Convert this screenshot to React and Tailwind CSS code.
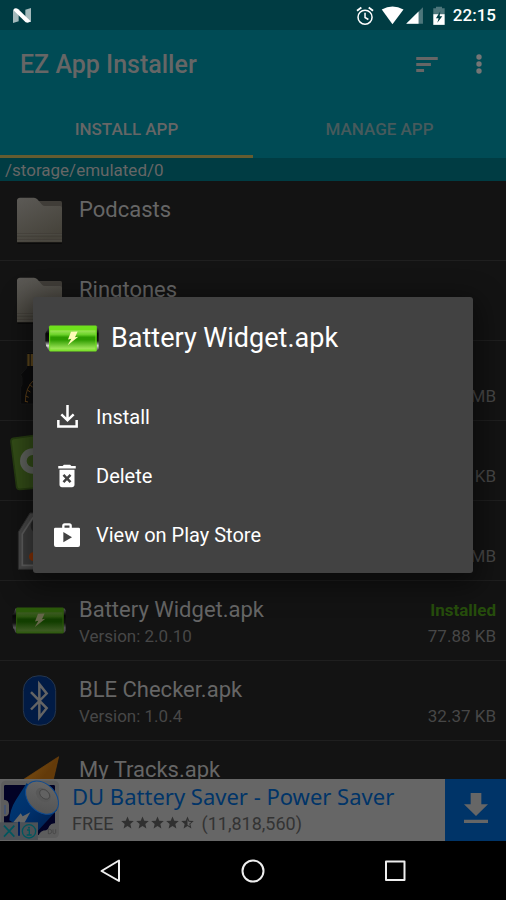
import React from "react";

function NougatLogo() {
  return (
    <svg viewBox="0 0 54 45" className="h-[15px] w-[18px]" aria-hidden="true">
      <path d="M0 4L17 9V40L0 45Z" fill="#a3b9bb" />
      <path d="M37 5L54 0V42L37 38Z" fill="#a3b9bb" />
      <path d="M3 2Q10 -1 16 4L53 40Q46 46 38 43L3 8Z" fill="#fff" />
    </svg>
  );
}

function StatusIcons() {
  return (
    <svg viewBox="0 0 266 56" className="h-[19px] w-[89px]" aria-hidden="true">
      <g fill="none" stroke="#fff" strokeWidth="4.5">
        <circle cx="27" cy="33" r="21" />
        <path d="M27 20V34L37 40" />
        <path d="M3 14L16 4M51 14L38 4" strokeWidth="5.5" />
      </g>
      <path d="M77 10Q109 -8 142 10L109 54Z" fill="#fff" />
      <path d="M150 53L200 3V53Z" fill="#4d767b" />
      <path d="M150 53L187 16V53Z" fill="#fff" />
      <path d="M231 6H239V2H257V6H265V24H231Z" fill="#4d767b" />
      <path d="M231 24H265V56H231Z" fill="#fff" />
      <path d="M252 15L239 36H247L243 50L258 30H250Z" fill="#003c43" />
    </svg>
  );
}

function SortIcon() {
  return (
    <svg viewBox="0 0 66 46" className="h-[15px] w-[22px]" fill="#666" aria-hidden="true">
      <path d="M0 0H66V9H0ZM0 18.500H45V27.500H0ZM0 37H24V46H0Z" />
    </svg>
  );
}

function MoreIcon() {
  return (
    <svg viewBox="0 0 6 20" className="h-5 w-[6px]" fill="#757575" aria-hidden="true">
      <circle cx="3" cy="3" r="2.700" />
      <circle cx="3" cy="10" r="2.700" />
      <circle cx="3" cy="17" r="2.700" />
    </svg>
  );
}

function FolderIcon() {
  return (
    <svg viewBox="-3 0 162 144" className="h-12 w-[54px]" aria-hidden="true">
      <defs>
        <linearGradient id="folder" x1="0" y1="0" x2="0.500" y2="1">
          <stop offset="0" stopColor="#5c5a56" />
          <stop offset="1" stopColor="#46433b" />
        </linearGradient>
      </defs>
      <rect x="13" y="132" width="134" height="9" rx="3" fill="#0a0a0a" />
      <path d="M70 12H143Q147 12 147 17V60H70Z" fill="#403d38" />
      <path d="M12 10Q13 2 21 2H63Q69 2 73 7L87 23Q90 27 96 27H141Q147 27 147 33V136H12Z" fill="url(#folder)" />
      <path d="M12 110H147M12 118H147M12 128H147" stroke="#3a3832" strokeWidth="1.500" />
      <path d="M12 112H147M12 130H147" stroke="#5c5951" strokeWidth="1" />
    </svg>
  );
}

function BatteryIcon({ dim }) {
  const id = dim ? "battery-dim" : "battery";
  const c = dim
    ? { edge: "#2c5a0b", light: "#3c5a22", deep: "#123e00", low: "#2b5410", cap: "#555", bolt: "#66664a" }
    : { edge: "#6fe01c", light: "#9be356", deep: "#2e9c00", low: "#6bd229", cap: "#ddd", bolt: "#fffbb8" };
  return (
    <svg viewBox="0 0 162 80" className="h-[27px] w-[54px]" aria-hidden="true">
      <defs>
        <linearGradient id={id} x1="0" y1="0" x2="0" y2="1">
          <stop offset="0" stopColor={c.edge} />
          <stop offset="0.180" stopColor={c.edge} />
          <stop offset="0.200" stopColor={c.light} />
          <stop offset="0.350" stopColor={c.low} />
          <stop offset="0.450" stopColor={c.deep} />
          <stop offset="0.550" stopColor={c.deep} />
          <stop offset="0.880" stopColor={c.light} />
          <stop offset="1" stopColor={c.edge} />
        </linearGradient>
        <linearGradient id={id + "-cap"} x1="0" y1="0" x2="0" y2="1">
          <stop offset="0" stopColor="#555" />
          <stop offset="0.300" stopColor="#060606" />
          <stop offset="0.600" stopColor="#111" />
          <stop offset="0.800" stopColor={c.cap} />
          <stop offset="1" stopColor="#444" />
        </linearGradient>
      </defs>
      <path d="M10 4H18V76H10L6 65H4L1 50V25L4 18H6Z" fill={"url(#" + id + "-cap)"} />
      <path d="M150 4H158L161 10V70L158 76H150Z" fill={"url(#" + id + "-cap)"} />
      <rect x="13" y="1" width="142" height="78" rx="3" fill={"url(#" + id + ")"} />
      <path d="M14 4V76M153 4V76" stroke={c.edge} strokeWidth="3" />
      <path d="M78 20L98 19L90 36L100 35L68 60L79 41L69 43Z" fill={c.bolt} />
    </svg>
  );
}

function SdCardIcon() {
  return (
    <svg viewBox="0 0 162 162" className="h-[54px] w-[54px] overflow-visible" aria-hidden="true">
      <path d="M44 -4H130V150H26V100L30 92V70L26 62L44 42Z" fill="#0b0b0c" stroke="#1c1c1c" strokeWidth="2" />
      <path d="M46 0H53V36H46ZM56 0H63V36H56ZM66 0H73V36H66Z" fill="#5e481d" />
      <path d="M40 144Q40 100 66 78" fill="none" stroke="#69471a" strokeWidth="2.500" />
      <path d="M40 142L48 144M41 126L50 130M46 108L55 114M54 92L62 100" fill="none" stroke="#69471a" strokeWidth="3" />
    </svg>
  );
}

function GreenCardIcon() {
  return (
    <svg viewBox="0 0 162 168" className="h-[56px] w-[54px] overflow-visible" aria-hidden="true">
      <path d="M4 16L150 -4L158 158L24 169Q16 170 14 162L-3 27Q-4 18 4 16Z" fill="#344e18" stroke="#263c11" strokeWidth="5" />
      <circle cx="62" cy="84" r="28" fill="none" stroke="#626660" strokeWidth="20" />
    </svg>
  );
}

function SimCardIcon() {
  return (
    <svg viewBox="0 0 162 174" className="h-[58px] w-[54px]" aria-hidden="true">
      <path d="M54 3H140V172H19V60Z" fill="#4a4a4a" stroke="#303030" strokeWidth="3" />
      <path d="M62 18H130V160H31V66Z" fill="#3e3e3e" stroke="#626262" strokeWidth="5" />
      <circle cx="78" cy="42" r="22" fill="#262626" />
      <circle cx="64" cy="134" r="13" fill="#8a3205" />
    </svg>
  );
}

function BluetoothIcon() {
  return (
    <svg viewBox="0 0 162 152" className="h-[51px] w-[54px]" aria-hidden="true">
      <rect x="34" y="2" width="97" height="148" rx="44" fill="#011b45" stroke="#26364c" strokeWidth="3" />
      <path d="M57 51L104 99L82 127V27L104 55L57 103" fill="none" stroke="#646464" strokeWidth="7.500" />
    </svg>
  );
}

function TracksIcon() {
  return (
    <svg viewBox="0 0 162 150" className="h-[50px] w-[54px]" aria-hidden="true">
      <defs>
        <linearGradient id="tracks" x1="0" y1="0" x2="0.600" y2="0.500">
          <stop offset="0" stopColor="#8b5d19" />
          <stop offset="1" stopColor="#633a09" />
        </linearGradient>
      </defs>
      <path d="M140 2L4 90L68 98L106 148Z" fill="url(#tracks)" stroke="#6e430d" strokeWidth="2" />
    </svg>
  );
}

const FILES = [
  { name: "Podcasts", icon: <FolderIcon /> },
  { name: "Ringtones", icon: <FolderIcon /> },
  { icon: <SdCardIcon />, size: "MB" },
  { icon: <GreenCardIcon />, size: "KB" },
  { icon: <SimCardIcon />, size: "MB" },
  { name: "Battery Widget.apk", icon: <BatteryIcon dim />, version: "Version: 2.0.10", size: "77.88 KB", installed: true },
  { name: "BLE Checker.apk", icon: <BluetoothIcon />, version: "Version: 1.0.4", size: "32.37 KB" },
  { name: "My Tracks.apk", icon: <TracksIcon /> },
];

function FileRow({ file }) {
  return (
    <li className="flex h-20 shrink-0 items-stretch border-b border-[#1f1f1f] pr-[10px] pl-3">
      <div className="flex w-[54px] shrink-0 items-center justify-center">{file.icon}</div>
      <div className="ml-[13px] flex min-w-0 flex-1 flex-col pt-[15px]">
        <div className="flex h-7 items-center justify-between">
          <span className="text-[22px] leading-7 text-[#666]">{file.name}</span>
          {file.installed && <span className="text-[17px] leading-7 font-bold text-[#264d0c]">Installed</span>}
        </div>
        <div className="flex h-6 items-center justify-between text-[17px] leading-6 text-[#474747]">
          <span>{file.version}</span>
          <span>{file.size}</span>
        </div>
      </div>
    </li>
  );
}

function InstallIcon() {
  return (
    <svg viewBox="0 0 63 69" className="h-[23px] w-[21px]" fill="none" stroke="#fff" strokeWidth="7.500" aria-hidden="true">
      <path d="M31.500 0V45M13 28L31.500 46L50 28" />
      <path d="M4 45V64.500H59V45" />
    </svg>
  );
}

function DeleteIcon() {
  return (
    <svg viewBox="0 0 24 24" className="h-[30px] w-[30px]" fill="#fff" aria-hidden="true">
      <path d="M6 19c0 1.100.9 2 2 2h8c1.100 0 2-.9 2-2V7H6v12zm2.460-7.120l1.410-1.410L12 12.590l2.120-2.120 1.410 1.410L13.410 14l2.120 2.120-1.410 1.410L12 15.410l-2.120 2.120-1.410-1.410L10.590 14l-2.130-2.120zM15.500 4l-1-1h-5l-1 1H5v2h14V4z" />
    </svg>
  );
}

function ShopIcon() {
  return (
    <svg viewBox="0 0 78 72" className="h-6 w-[26px]" aria-hidden="true">
      <path d="M28 16V8Q28 4 32 4H46Q50 4 50 8V16" fill="none" stroke="#fff" strokeWidth="7" />
      <path fillRule="evenodd" d="M4 14H74Q78 14 78 18V66Q78 72 72 72H6Q0 72 0 66V18Q0 14 4 14ZM28 27V58L54 42.500Z" fill="#fff" />
    </svg>
  );
}

function ActionDialog() {
  const actions = [
    { label: "Install", icon: <InstallIcon /> },
    { label: "Delete", icon: <DeleteIcon /> },
    { label: "View on Play Store", icon: <ShopIcon /> },
  ];
  return (
    <div className="absolute inset-x-0 top-[297px] px-[33px]">
      <section role="dialog" aria-labelledby="dialog-title" className="rounded-[3px] bg-[#424242] pb-[9px] shadow-[0_8px_28px_6px_rgba(0,0,0,0.45)]">
        <header className="flex h-[90px] items-center gap-3 pb-2 pl-3">
          <BatteryIcon />
          <h2 id="dialog-title" className="text-[27px] leading-8 text-white">Battery Widget.apk</h2>
        </header>
        {actions.map((a) => (
          <button key={a.label} type="button" className="flex h-[59px] w-full items-center gap-[14px] pl-[19px] text-left text-[20px] leading-6 text-white">
            <span className="flex w-[30px] justify-center">{a.icon}</span>
            {a.label}
          </button>
        ))}
      </section>
    </div>
  );
}

function Star({ half }) {
  return (
    <svg viewBox="0 0 24 24" className="h-[15px] w-[15px]" aria-hidden="true">
      {half ? (
        <path fill="#303030" d="M22 9.740l-7.190-.62L12 2.500 9.190 9.130 2 9.740l5.460 4.730-1.640 7.030L12 17.770l6.180 3.730-1.630-7.030L22 9.740zM12 15.900V6.600l1.710 4.040 4.380.38-3.320 2.880 1 4.280L12 15.900z" />
      ) : (
        <path fill="#303030" d="M12 17.770l6.180 3.730-1.640-7.030L22 9.740l-7.190-.61L12 2.500 9.190 9.130 2 9.740l5.460 4.730-1.640 7.030z" />
      )}
    </svg>
  );
}

function AdArtwork() {
  return (
    <svg viewBox="0 0 180 183" className="h-[61px] w-[60px] shrink-0" aria-hidden="true">
      <defs>
        <linearGradient id="ad-body" x1="0" y1="0" x2="1" y2="1">
          <stop offset="0" stopColor="#003b75" />
          <stop offset="0.500" stopColor="#00306b" />
          <stop offset="1" stopColor="#001c48" />
        </linearGradient>
        <linearGradient id="ad-top" x1="0" y1="0" x2="1" y2="1">
          <stop offset="0" stopColor="#6a6a6a" />
          <stop offset="1" stopColor="#505050" />
        </linearGradient>
      </defs>
      <rect x="3" y="5" width="174" height="172" rx="14" fill="#5d5d5d" />
      <path d="M16 18H161Q165 18 165 22V133Q153 132 148 141Q146 150 138 154Q122 154 116 168H12V112Q27 112 27 98V78Q27 63 12 62V22Q12 18 16 18Z" fill="#020225" />
      <path d="M80 12L172 92L104 166L70 150L28 124Q30 90 48 62Z" fill="url(#ad-body)" />
      <ellipse cx="126" cy="56" rx="57" ry="41" transform="rotate(46 126 56)" fill="url(#ad-top)" stroke="#0f4b91" strokeWidth="3" />
      <ellipse cx="130" cy="48" rx="25" ry="18" transform="rotate(42 130 48)" fill="#585858" />
      <ellipse cx="134" cy="46" rx="17" ry="12" transform="rotate(42 134 46)" fill="#626262" stroke="#3d3d3d" strokeWidth="2" />
      <path d="M40 130L62 103L68 112L91 100L73 132Z" fill="#676767" />
      <path d="M15 78V106" stroke="#304c86" strokeWidth="3" />
      <rect x="0" y="130" width="114" height="53" fill="#4d5257" />
      <path d="M57 128V170" stroke="#00205c" strokeWidth="6" />
      <path d="M12 140L43 173M43 140L12 173" stroke="#00565e" strokeWidth="5" />
      <circle cx="87" cy="157" r="20" fill="none" stroke="#00565e" strokeWidth="4" />
      <path d="M81 153H88V168M80 168H95" fill="none" stroke="#00565e" strokeWidth="4" />
      <circle cx="87" cy="146" r="3" fill="#00565e" />
      <path d="M145 151V164H149Q155 164 155 157.500Q155 151 149 151ZM159 151V160Q159 164 163 164Q167 164 167 160V151" fill="none" stroke="#3f3f3f" strokeWidth="2" />
    </svg>
  );
}

function AdBanner() {
  return (
    <aside className="flex h-[62px] shrink-0 bg-[#666]">
      <AdArtwork />
      <div className="flex min-w-0 flex-1 flex-col pl-3">
        <a href="#ad" className="font-['Noto_Sans','Open_Sans',sans-serif] text-[22px] leading-[34px] whitespace-nowrap text-[#003468]">DU Battery Saver - Power Saver</a>
        <div className="flex h-[22px] items-center text-[18px] leading-[22px] text-[#333]">
          <span>FREE</span>
          <span className="mr-[7px] ml-[6px] flex pb-1">
            <Star /><Star /><Star /><Star /><Star half />
          </span>
          <span>(11,818,560)</span>
        </div>
      </div>
      <button type="button" aria-label="Download" className="flex w-[61px] shrink-0 items-center justify-center bg-[#003468] pb-1">
        <svg viewBox="0 0 72 90" className="h-[30px] w-6" fill="#666" aria-hidden="true">
          <path d="M20 0H52V34H72L36 69L0 34H20ZM0 80H72V90H0Z" />
        </svg>
      </button>
    </aside>
  );
}

function NavigationBar() {
  const button = "flex flex-1 items-center justify-center";
  return (
    <nav className="flex h-[59px] shrink-0 items-center bg-black px-[40px]" aria-label="System navigation">
      <button type="button" aria-label="Back" className={button}>
        <svg viewBox="0 0 24 24" className="h-6 w-6" fill="none" stroke="#eee" strokeWidth="2" strokeLinejoin="round" aria-hidden="true">
          <path d="M20 1.500V22L2.500 12Z" />
        </svg>
      </button>
      <button type="button" aria-label="Home" className={button}>
        <svg viewBox="0 0 24 24" className="h-6 w-6" fill="none" stroke="#eee" strokeWidth="2" aria-hidden="true">
          <circle cx="12" cy="12" r="10.500" />
        </svg>
      </button>
      <button type="button" aria-label="Recent apps" className={button}>
        <svg viewBox="0 0 24 24" className="h-6 w-6" fill="none" stroke="#eee" strokeWidth="2" strokeLinejoin="round" aria-hidden="true">
          <rect x="3" y="2.500" width="18.500" height="18.500" />
        </svg>
      </button>
    </nav>
  );
}

export default function App() {
  return (
    <main className="relative flex h-screen flex-col overflow-hidden bg-[#131313] font-[Roboto,sans-serif]">
      <div className="flex h-[30px] shrink-0 items-center justify-between bg-[#003c43] pr-[10px] pl-[13px]">
        <NougatLogo />
        <div className="flex items-center gap-2">
          <StatusIcons />
          <time className="text-[17px] leading-6 font-medium text-white">22:15</time>
        </div>
      </div>
      <header className="shrink-0 bg-[#004b55]">
        <div className="flex h-[68px] items-center pr-6 pl-5">
          <h1 className="flex-1 pt-[2px] text-[25px] leading-8 font-medium text-[#666]">EZ App Installer</h1>
          <div className="flex items-center gap-[38px]">
            <button type="button" aria-label="Sort"><SortIcon /></button>
            <button type="button" aria-label="More options"><MoreIcon /></button>
          </div>
        </div>
        <div role="tablist" className="grid h-[60px] grid-cols-2 text-[17px] leading-6 font-medium">
          <button type="button" role="tab" aria-selected="true" className="border-b-3 border-[#665c30] pt-1 text-[#666]">INSTALL APP</button>
          <button type="button" role="tab" aria-selected="false" className="border-b-3 border-transparent pt-1 text-[#475a5c]">MANAGE APP</button>
        </div>
      </header>
      <p className="h-[23px] shrink-0 bg-[#003c43] pl-[5px] text-[17px] leading-6 text-[#666]">/storage/emulated/0</p>
      <ul className="flex min-h-0 flex-1 flex-col overflow-hidden">
        {FILES.map((file, i) => (
          <FileRow key={i} file={file} />
        ))}
      </ul>
      <AdBanner />
      <NavigationBar />
      <ActionDialog />
    </main>
  );
}
